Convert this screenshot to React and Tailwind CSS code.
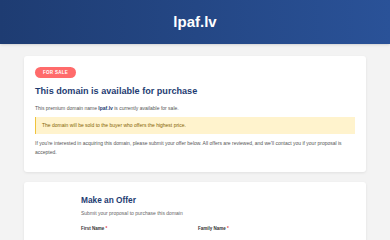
import React from "react";

const App = () => {
  return (
    <div className="min-h-screen bg-[#f3f3f3] font-['Liberation_Sans',Arial,sans-serif]">
      {/* header */}
      <div className="h-[44px] flex items-center justify-center bg-gradient-to-r from-[#1e3c72] to-[#2a5298] shadow-sm">
        <h1 className="text-[15px] font-bold text-white">lpaf.lv</h1>
      </div>

      <div className="px-[24px] pt-[12px] flex flex-col gap-[10px]">
        {/* domain info */}
        <div className="bg-white rounded-[3px] shadow-[0_1px_3px_rgba(0,0,0,0.08)] px-[11px] pt-[11px] pb-[15px]">
          <div className="flex">
            <span className="h-[11px] px-[8px] rounded-full bg-[#ff6b6b] text-white text-[4.5px] font-bold leading-[11px] tracking-[0.3px]">
              FOR SALE
            </span>
          </div>
          <h2 className="mt-[6px] text-[9.1px] leading-[14px] font-bold text-[#1e3c72]">
            This domain is available for purchase
          </h2>
          <p className="mt-[6px] text-[5px] leading-[8px] text-[#555]">
            This premium domain name <span className="font-bold text-[#1e3c72]">lpaf.lv</span> is currently available for sale.
          </p>
          <div className="mt-[5px] bg-[#fff3cd] border-l-[1.5px] border-[#f0c33c] px-[6px] py-[5px] text-[5px] leading-[7px] text-[#856404]">
            The domain will be sold to the buyer who offers the highest price.
          </div>
          <p className="mt-[5px] text-[5px] leading-[9px] text-[#555]">
            If you're interested in acquiring this domain, please submit your offer below. All offers are reviewed, and we'll contact you if your proposal is accepted.
          </p>
        </div>

        {/* offer form */}
        <div className="bg-white rounded-[3px] shadow-[0_1px_3px_rgba(0,0,0,0.08)] pt-[12px] pb-[20px]">
          <div className="w-[228px] mx-auto">
            <h3 className="text-[8.3px] leading-[13px] font-bold text-[#1e3c72]">Make an Offer</h3>
            <p className="mt-[2px] text-[5px] leading-[8px] text-[#666]">Submit your proposal to purchase this domain</p>
            <div className="mt-[8px] grid grid-cols-2 gap-[6px]">
              <div>
                <label className="block text-[4.5px] leading-[7px] font-bold text-[#333]">
                  First Name <span className="text-[#e53e3e]">*</span>
                </label>
                <input
                  className="mt-[2.5px] w-full h-[14px] border border-[#d0d0d0] rounded-[2px] px-[4px] text-[4.5px] placeholder:text-[#bbb] outline-none"
                  placeholder="Enter your first name"
                />
              </div>
              <div>
                <label className="block text-[4.5px] leading-[7px] font-bold text-[#333]">
                  Family Name <span className="text-[#e53e3e]">*</span>
                </label>
                <input
                  className="mt-[2.5px] w-full h-[14px] border border-[#d0d0d0] rounded-[2px] px-[4px] text-[4.5px] placeholder:text-[#bbb] outline-none"
                  placeholder="Enter your family name"
                />
              </div>
            </div>
          </div>
        </div>
      </div>
    </div>
  );
};

export default App;
